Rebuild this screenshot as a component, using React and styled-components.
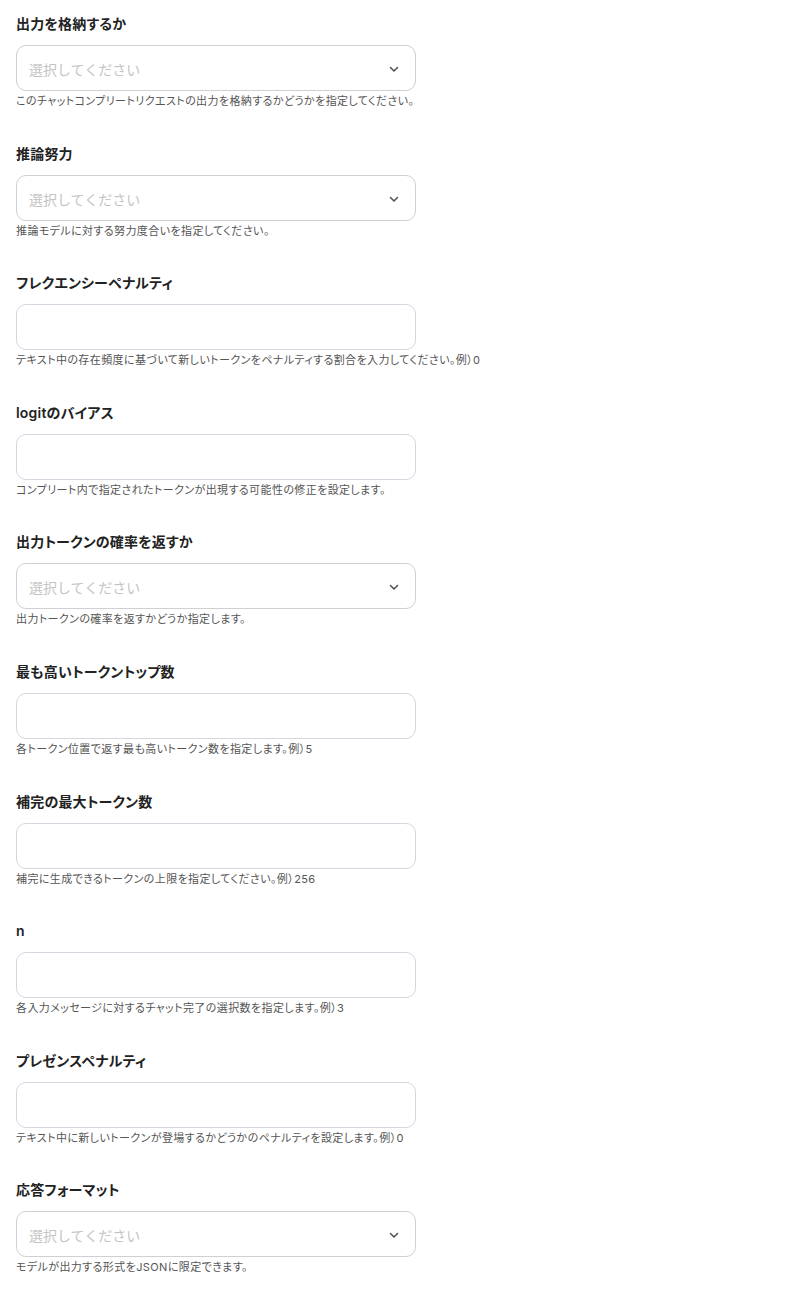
import React from "react";
import styled, { createGlobalStyle } from "styled-components";

const GlobalStyle = createGlobalStyle`
  body {
    margin: 0;
    background: #fff;
    font-family: "Inter", "Noto Sans CJK JP", sans-serif;
  }
`;

const SForm = styled.div`
  display: flex;
  flex-direction: column;
  gap: 34.6px;
  padding: 14px 16px 20px;
`;

const SField = styled.div`
  display: flex;
  flex-direction: column;
  width: 400px;
`;

const SLabel = styled.label`
  font-size: 14px;
  line-height: 20px;
  font-weight: 600;
  color: #222;
  margin-bottom: 11px;
  white-space: nowrap;
  letter-spacing: 0.2px;
  font-feature-settings: "palt";
`;

const SBox = styled.div`
  box-sizing: border-box;
  height: 46px;
  border: 1px solid ${props => (props.select ? "#cfcfd4" : "#d3d7e0")};
  border-radius: 10px;
  background: #fff;
  display: flex;
  align-items: center;
  justify-content: space-between;
  padding: 2px 14px 0 12px;
`;

const SPlaceholder = styled.span`
  font-size: 14px;
  color: #c4c4c4;
`;

const SInput = styled.input`
  border: none;
  outline: none;
  width: 100%;
  font-size: 14px;
  font-family: inherit;
  background: transparent;
`;

const SHelp = styled.div`
  margin-top: 2px;
  font-size: 11px;
  line-height: 16px;
  color: #555;
  white-space: nowrap;
  letter-spacing: 0.4px;
  font-feature-settings: "palt";
`;

const Chevron = () => (
  <svg width="14" height="14" viewBox="0 0 24 24" fill="none" stroke="#555" strokeWidth="2.8" strokeLinecap="round" strokeLinejoin="round">
    <path d="M6 9.5l6 6 6-6" />
  </svg>
);

const fields = [
  { label: "出力を格納するか", select: true, help: "このチャットコンプリートリクエストの出力を格納するかどうかを指定してください。" },
  { label: "推論努力", select: true, help: "推論モデルに対する努力度合いを指定してください。" },
  { label: "フレクエンシーペナルティ", help: "テキスト中の存在頻度に基づいて新しいトークンをペナルティする割合を入力してください。例）0" },
  { label: "logitのバイアス", help: "コンプリート内で指定されたトークンが出現する可能性の修正を設定します。" },
  { label: "出力トークンの確率を返すか", select: true, help: "出力トークンの確率を返すかどうか指定します。" },
  { label: "最も高いトークントップ数", help: "各トークン位置で返す最も高いトークン数を指定します。例）5" },
  { label: "補完の最大トークン数", help: "補完に生成できるトークンの上限を指定してください。例）256" },
  { label: "n", help: "各入力メッセージに対するチャット完了の選択数を指定します。例）3" },
  { label: "プレゼンスペナルティ", help: "テキスト中に新しいトークンが登場するかどうかのペナルティを設定します。例）0" },
  { label: "応答フォーマット", select: true, help: "モデルが出力する形式をJSONに限定できます。" },
];

const App = () => {
  return (
    <>
      <GlobalStyle />
      <SForm>
        {fields.map(f => (
          <SField key={f.label}>
            <SLabel>{f.label}</SLabel>
            <SBox select={f.select}>
              {f.select ? (
                <>
                  <SPlaceholder>選択してください</SPlaceholder>
                  <Chevron />
                </>
              ) : (
                <SInput />
              )}
            </SBox>
            <SHelp>{f.help}</SHelp>
          </SField>
        ))}
      </SForm>
    </>
  );
};

export default App;
